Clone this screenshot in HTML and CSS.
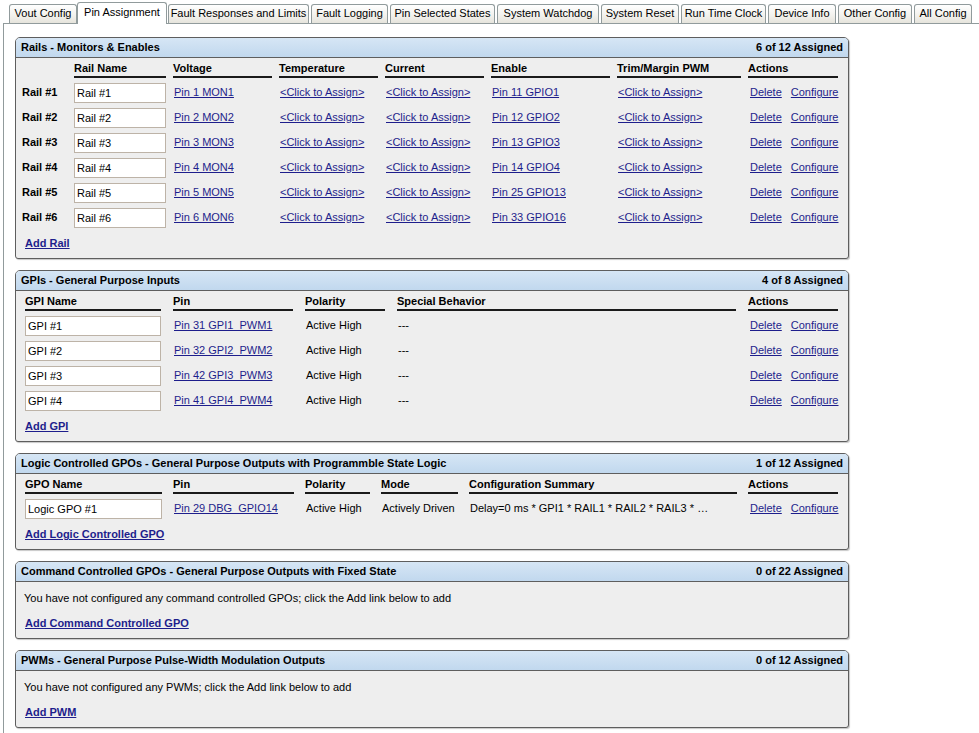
FILE: index.html
```html
<!DOCTYPE html>
<html>
<head>
<meta charset="utf-8">
<title>Pin Assignment</title>
<link rel="stylesheet" href="styles.css">
</head>
<body>
<div class="tabbar">
  <div class="tab">Vout Config</div>
  <div class="tab active">Pin Assignment</div>
  <div class="tab">Fault Responses and Limits</div>
  <div class="tab">Fault Logging</div>
  <div class="tab">Pin Selected States</div>
  <div class="tab">System Watchdog</div>
  <div class="tab">System Reset</div>
  <div class="tab">Run Time Clock</div>
  <div class="tab">Device Info</div>
  <div class="tab">Other Config</div>
  <div class="tab">All Config</div>
</div>
<div class="panel">
  <section class="box">
    <div class="box-head"><span>Rails - Monitors &amp; Enables</span><span>6 of 12 Assigned</span></div>
    <div class="box-body">
      <div class="grid rails">
        <div class="th blank"></div><div class="th">Rail Name</div><div class="th">Voltage</div><div class="th">Temperature</div><div class="th">Current</div><div class="th">Enable</div><div class="th">Trim/Margin PWM</div><div class="th end">Actions</div>

        <div class="td lbl">Rail #1</div><div class="td inp"><input class="field" value="Rail #1"></div><div class="td"><a href="#">Pin 1 MON1</a></div><div class="td"><a href="#">&lt;Click to Assign&gt;</a></div><div class="td"><a href="#">&lt;Click to Assign&gt;</a></div><div class="td"><a href="#">Pin 11 GPIO1</a></div><div class="td"><a href="#">&lt;Click to Assign&gt;</a></div><div class="td act"><a href="#">Delete</a><a href="#">Configure</a></div>

        <div class="td lbl">Rail #2</div><div class="td inp"><input class="field" value="Rail #2"></div><div class="td"><a href="#">Pin 2 MON2</a></div><div class="td"><a href="#">&lt;Click to Assign&gt;</a></div><div class="td"><a href="#">&lt;Click to Assign&gt;</a></div><div class="td"><a href="#">Pin 12 GPIO2</a></div><div class="td"><a href="#">&lt;Click to Assign&gt;</a></div><div class="td act"><a href="#">Delete</a><a href="#">Configure</a></div>

        <div class="td lbl">Rail #3</div><div class="td inp"><input class="field" value="Rail #3"></div><div class="td"><a href="#">Pin 3 MON3</a></div><div class="td"><a href="#">&lt;Click to Assign&gt;</a></div><div class="td"><a href="#">&lt;Click to Assign&gt;</a></div><div class="td"><a href="#">Pin 13 GPIO3</a></div><div class="td"><a href="#">&lt;Click to Assign&gt;</a></div><div class="td act"><a href="#">Delete</a><a href="#">Configure</a></div>

        <div class="td lbl">Rail #4</div><div class="td inp"><input class="field" value="Rail #4"></div><div class="td"><a href="#">Pin 4 MON4</a></div><div class="td"><a href="#">&lt;Click to Assign&gt;</a></div><div class="td"><a href="#">&lt;Click to Assign&gt;</a></div><div class="td"><a href="#">Pin 14 GPIO4</a></div><div class="td"><a href="#">&lt;Click to Assign&gt;</a></div><div class="td act"><a href="#">Delete</a><a href="#">Configure</a></div>

        <div class="td lbl">Rail #5</div><div class="td inp"><input class="field" value="Rail #5"></div><div class="td"><a href="#">Pin 5 MON5</a></div><div class="td"><a href="#">&lt;Click to Assign&gt;</a></div><div class="td"><a href="#">&lt;Click to Assign&gt;</a></div><div class="td"><a href="#">Pin 25 GPIO13</a></div><div class="td"><a href="#">&lt;Click to Assign&gt;</a></div><div class="td act"><a href="#">Delete</a><a href="#">Configure</a></div>

        <div class="td lbl">Rail #6</div><div class="td inp"><input class="field" value="Rail #6"></div><div class="td"><a href="#">Pin 6 MON6</a></div><div class="td"><a href="#">&lt;Click to Assign&gt;</a></div><div class="td"><a href="#">&lt;Click to Assign&gt;</a></div><div class="td"><a href="#">Pin 33 GPIO16</a></div><div class="td"><a href="#">&lt;Click to Assign&gt;</a></div><div class="td act"><a href="#">Delete</a><a href="#">Configure</a></div>
      </div>
      <a class="add" href="#">Add Rail</a>
    </div>
  </section>

  <section class="box">
    <div class="box-head"><span>GPIs - General Purpose Inputs</span><span>4 of 8 Assigned</span></div>
    <div class="box-body">
      <div class="grid gpis">
        <div class="th">GPI Name</div><div class="th">Pin</div><div class="th">Polarity</div><div class="th">Special Behavior</div><div class="th end">Actions</div>

        <div class="td inp"><input class="field" value="GPI #1"></div><div class="td"><a href="#">Pin 31 GPI1_PWM1</a></div><div class="td">Active High</div><div class="td">---</div><div class="td act"><a href="#">Delete</a><a href="#">Configure</a></div>

        <div class="td inp"><input class="field" value="GPI #2"></div><div class="td"><a href="#">Pin 32 GPI2_PWM2</a></div><div class="td">Active High</div><div class="td">---</div><div class="td act"><a href="#">Delete</a><a href="#">Configure</a></div>

        <div class="td inp"><input class="field" value="GPI #3"></div><div class="td"><a href="#">Pin 42 GPI3_PWM3</a></div><div class="td">Active High</div><div class="td">---</div><div class="td act"><a href="#">Delete</a><a href="#">Configure</a></div>

        <div class="td inp"><input class="field" value="GPI #4"></div><div class="td"><a href="#">Pin 41 GPI4_PWM4</a></div><div class="td">Active High</div><div class="td">---</div><div class="td act"><a href="#">Delete</a><a href="#">Configure</a></div>
      </div>
      <a class="add" href="#">Add GPI</a>
    </div>
  </section>

  <section class="box">
    <div class="box-head"><span>Logic Controlled GPOs - General Purpose Outputs with Programmble State Logic</span><span>1 of 12 Assigned</span></div>
    <div class="box-body">
      <div class="grid gpos">
        <div class="th">GPO Name</div><div class="th">Pin</div><div class="th">Polarity</div><div class="th">Mode</div><div class="th">Configuration Summary</div><div class="th end">Actions</div>

        <div class="td inp"><input class="field" value="Logic GPO #1"></div><div class="td"><a href="#">Pin 29 DBG_GPIO14</a></div><div class="td">Active High</div><div class="td">Actively Driven</div><div class="td">Delay=0 ms * GPI1 * RAIL1 * RAIL2 * RAIL3 * …</div><div class="td act"><a href="#">Delete</a><a href="#">Configure</a></div>
      </div>
      <a class="add" href="#">Add Logic Controlled GPO</a>
    </div>
  </section>

  <section class="box">
    <div class="box-head"><span>Command Controlled GPOs - General Purpose Outputs with Fixed State</span><span>0 of 22 Assigned</span></div>
    <div class="box-body">
      <p class="msg">You have not configured any command controlled GPOs; click the Add link below to add</p>
      <a class="add after-msg" href="#">Add Command Controlled GPO</a>
    </div>
  </section>

  <section class="box">
    <div class="box-head"><span>PWMs - General Purpose Pulse-Width Modulation Outputs</span><span>0 of 12 Assigned</span></div>
    <div class="box-body">
      <p class="msg">You have not configured any PWMs; click the Add link below to add</p>
      <a class="add after-msg" href="#">Add PWM</a>
    </div>
  </section>
</div>
</body>
</html>
```

FILE: styles.css
```css
* { box-sizing: border-box; }

html, body {
  margin: 0;
  background: #fff;
}

body {
  font: 11px/13px "Liberation Sans", Tahoma, Arial, sans-serif;
  color: #000;
  overflow: hidden;
}

a {
  color: #1e1e8c;
  text-decoration: underline;
}

/* ---------- tabs ---------- */
.tabbar {
  display: flex;
  align-items: flex-end;
  height: 24px;
  margin-left: 3px;
  padding-left: 6px;
  border-bottom: 1px solid #919b9c;
}

.tab {
  flex: none;
  height: 19px;
  border: 1px solid #919b9c;
  border-bottom: 0;
  border-radius: 3px 3px 0 0;
  background: linear-gradient(#ffffff, #f3f2ee 55%, #e6e4dc);
  text-align: center;
  line-height: 17px;
  margin-right: 2px;
  white-space: nowrap;
}

.tab.active {
  height: 22px;
  margin-bottom: -1px;
  background: #fff;
  line-height: 19px;
  margin-right: 1px;
}

.tab:nth-child(1) { width: 68px; margin-right: 0; }
.tab:nth-child(2) { width: 90px; }
.tab:nth-child(3) { width: 141px; }
.tab:nth-child(4) { width: 77px; }
.tab:nth-child(5) { width: 105px; }
.tab:nth-child(6) { width: 102px; }
.tab:nth-child(7) { width: 78px; }
.tab:nth-child(8) { width: 85px; }
.tab:nth-child(9) { width: 68px; }
.tab:nth-child(10) { width: 74px; }
.tab:nth-child(11) { width: 58px; }

/* ---------- panel ---------- */
.panel {
  margin-left: 3px;
  border-left: 1px solid #919b9c;
  padding: 13px 0 0 11px;
  min-height: 720px;
}

.box {
  width: 834px;
  border: 1px solid #5e5e5e;
  border-radius: 5px 5px 3px 3px;
  background: #eeeeee;
  box-shadow: 1px 1px 1px rgba(0, 0, 0, 0.22);
  margin-bottom: 11px;
  overflow: hidden;
}

.box-head {
  display: flex;
  justify-content: space-between;
  height: 20px;
  padding: 0 5px;
  line-height: 19px;
  font-weight: bold;
  background: linear-gradient(#d6e6f5, #c1d8ee);
  border-bottom: 1px solid #5e5e5e;
  white-space: nowrap;
}

.box-body {
  padding: 0 0 8px 0;
}

/* ---------- grids ---------- */
.grid {
  display: grid;
  --g: 7px;
}

.rails {
  grid-template-columns: 58px 99px 106px 106px 106px 126px 131px 95px;
}

.gpis {
  margin-left: 9px;
  --g: 12px;
  grid-template-columns: 148px 132px 92px 351px 95px;
}

.gpos {
  margin-left: 9px;
  --g: 11px;
  grid-template-columns: 148px 132px 76px 88px 279px 95px;
}

.th {
  font-weight: bold;
  padding: 4px 0 1px;
  line-height: 13px;
  border-bottom: 2px solid #1a1a1a;
  margin-right: var(--g);
  margin-bottom: 2px;
  white-space: nowrap;
}

.th.end { margin-right: 5px; }
.th.blank { border-bottom-color: transparent; }

.td {
  height: 25px;
  display: flex;
  align-items: center;
  padding-left: 1px;
  white-space: nowrap;
  overflow: hidden;
}

.td.lbl {
  font-weight: bold;
  padding-left: 6px;
}

.td.inp { padding-left: 0; }

.field {
  width: calc(100% - var(--g));
  height: 20px;
  border: 1px solid #bdb3a7;
  background: #fff;
  font: 11px "Liberation Sans", Tahoma, Arial, sans-serif;
  color: #000;
  padding: 0 2px;
  margin: 0;
  outline: none;
}

.act { padding-left: 2px; }
.act a + a { margin-left: 9px; }

/* ---------- add links / messages ---------- */
.add {
  display: block;
  width: max-content;
  font-weight: bold;
  margin: 7px 0 0 9px;
  line-height: 13px;
}

.msg {
  margin: 0;
  padding: 10px 0 0 8px;
  line-height: 13px;
}

.add.after-msg { margin-top: 12px; }
```
